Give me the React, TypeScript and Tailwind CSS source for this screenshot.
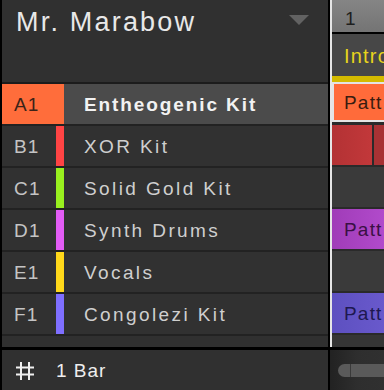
import React from "react";

const font = { fontFamily: '"Liberation Sans", Arial, sans-serif' };

type Row = { id: string; name: string; color: string; selected?: boolean };

const rows: Row[] = [
  { id: "A1", name: "Entheogenic Kit", color: "#ff6d3b", selected: true },
  { id: "B1", name: "XOR Kit", color: "#ff4444" },
  { id: "C1", name: "Solid Gold Kit", color: "#99f01f" },
  { id: "D1", name: "Synth Drums", color: "#e25cf5" },
  { id: "E1", name: "Vocals", color: "#ffd81a" },
  { id: "F1", name: "Congolezi Kit", color: "#7f6fff" },
];

function LeftRow({ r }: { r: Row }) {
  if (r.selected) {
    return (
      <div className="flex h-[40px]">
        <div className="flex w-[62px] items-center bg-[#ff6d3b] pl-[12px] pt-[3px] text-[19px] tracking-[1.2px] text-[#3b2318]">
          {r.id}
        </div>
        <div className="flex flex-1 items-center bg-[#4b4b4b] pl-[20px] pt-[3px] text-[19px] font-bold tracking-[1.9px] text-[#f2f2f2]">
          {r.name}
        </div>
      </div>
    );
  }
  return (
    <div className="flex h-[42px] border-b-2 border-[#222222] bg-[#313131]">
      <div className="flex w-[54px] items-center pl-[12px] pt-[3px] text-[19px] tracking-[1.2px] text-[#c4c4c4]">
        {r.id}
      </div>
      <div className="w-[8px]" style={{ backgroundColor: r.color }} />
      <div className="flex flex-1 items-center pl-[20px] pt-[3px] text-[19px] tracking-[2.4px] text-[#cfcfcf]">
        {r.name}
      </div>
    </div>
  );
}

export default function App() {
  return (
    <div className="flex h-[390px] w-[384px] flex-col overflow-hidden bg-[#303030]" style={font}>
      <div className="flex h-[347px]">
        {/* Left panel */}
        <div className="flex w-[328px] shrink-0 flex-col border-l-2 border-black bg-[#303030]">
          <div className="relative h-[84px] border-b-2 border-[#1c1c1c] bg-[#303030]">
            <div className="pl-[14px] pt-[9px] text-[27px] leading-[27px] tracking-[2.2px] text-[#e8e8e8]">
              Mr. Marabow
            </div>
            <svg className="absolute left-[286px] top-[15px]" width="22" height="11" viewBox="0 0 22 11">
              <polygon points="1,0 21,0 11,10" fill="#626262" />
            </svg>
          </div>
          <div className="flex flex-col">
            <div className="h-[42px] border-b-2 border-[#222222]">
              <LeftRow r={rows[0]} />
            </div>
            {rows.slice(1).map((r) => (
              <LeftRow key={r.id} r={r} />
            ))}
          </div>
          <div className="flex-1 bg-[#303030]" />
        </div>
        {/* divider */}
        <div className="w-[2px] shrink-0 bg-black" />
        {/* Right arrangement */}
        <div className="flex min-w-0 flex-1 overflow-hidden">
          <div className="w-[2px] shrink-0 bg-[#e6e6e6]" />
          <div className="flex min-w-0 flex-1 flex-col overflow-hidden whitespace-nowrap bg-[#3a3a3a]">
            <div className="h-[34px] border-b-2 border-black bg-gradient-to-b from-[#858585] to-[#747474] pl-[13px] pt-[5px] text-[19px] text-[#1e1e1e]">
              1
            </div>
            <div className="flex h-[42px] items-center bg-[#474747] pl-[12px] pt-[2px] text-[20px] tracking-[1.2px] text-[#e8d41c]">
              Intro
            </div>
            <div className="h-[6px] bg-[#d4bb00]" />
            {/* A1 pattern */}
            <div className="h-[43px] border-b-[3px] border-[#2a2a2a]">
              <div className="flex h-[40px] items-center border-2 border-r-0 border-[#e4e4e4] bg-[#ff6b3a] pl-[10px] pt-[2px] text-[19px] tracking-[1.2px] text-[#3a1c10]">
                Patt
              </div>
            </div>
            {/* B1 */}
            <div className="flex h-[42px] border-b-2 border-[#2a2a2a]">
              <div className="w-[40px] bg-gradient-to-r from-[#b33234] to-[#c2383a]" />
              <div className="w-[2px] bg-[#2a2a2a]" />
              <div className="flex-1 bg-[#a83234]" />
            </div>
            {/* C1 */}
            <div className="h-[42px] border-b-2 border-[#2a2a2a] bg-[#3a3a3a]" />
            {/* D1 */}
            <div className="flex h-[42px] items-center border-b-2 border-[#2a2a2a] bg-gradient-to-r from-[#a03cb8] to-[#b14acb] pl-[12px] pt-[2px] text-[19px] tracking-[1.2px] text-[#3a1044]">
              Patt
            </div>
            {/* E1 */}
            <div className="h-[42px] border-b-2 border-[#2a2a2a] bg-[#3a3a3a]" />
            {/* F1 */}
            <div className="flex h-[42px] items-center border-b-2 border-[#2a2a2a] bg-gradient-to-r from-[#5d50c0] to-[#6959cc] pl-[12px] pt-[2px] text-[19px] tracking-[1.2px] text-[#1e1850]">
              Patt
            </div>
            <div className="flex-1 bg-[#353535]" />
          </div>
        </div>
      </div>
      <div className="h-[3px] bg-black" />
      {/* Bottom bar */}
      <div className="flex h-[40px]">
        <div className="flex w-[328px] shrink-0 items-center border-l-2 border-black bg-[#303030] pl-[14px]">
          <svg width="18" height="18" viewBox="0 0 18 18" className="mt-[2px]">
            <path d="M5 0V18M13 0V18M0 5.5H18M0 12.5H18" stroke="#f0f0f0" strokeWidth="2" />
          </svg>
          <span className="ml-[22px] pt-[3px] text-[19px] tracking-[1px] text-[#eeeeee]">1 Bar</span>
        </div>
        <div className="w-[2px] shrink-0 bg-black" />
        <div className="flex min-w-0 flex-1 items-center bg-gradient-to-r from-[#222222] via-[#2e2e2e] to-[#303030] pl-[8px]">
          <div className="h-[13px] w-[12px] rounded-l-full bg-[#5a5a5a]" />
          <div className="h-[13px] w-[1px] bg-[#3a3a3a]" />
          <div className="h-[13px] flex-1 bg-[#5a5a5a]" />
        </div>
      </div>
    </div>
  );
}
